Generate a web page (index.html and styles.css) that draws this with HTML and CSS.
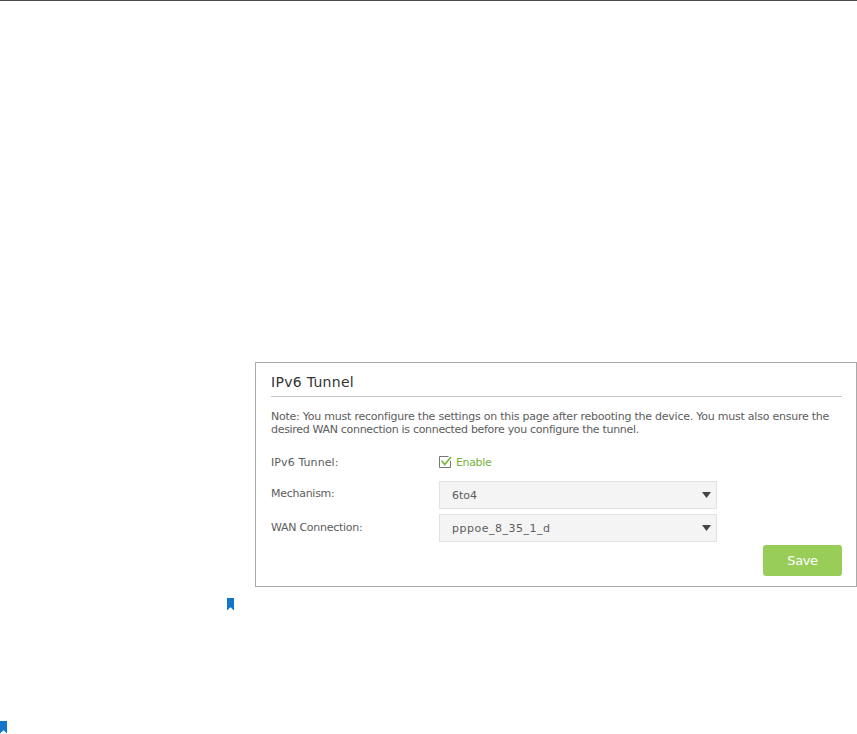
FILE: index.html
```
<!DOCTYPE html>
<html lang="en">
<head>
<meta charset="utf-8">
<title>IPv6 Tunnel</title>
<link rel="stylesheet" href="styles.css">
</head>
<body>
<main class="page">
  <section class="card">
    <h1 class="title">IPv6 Tunnel</h1>
    <p class="note"><span class="n1">Note: You must reconfigure the settings on this page after rebooting the device. You must also ensure the</span><br><span class="n2">desired WAN connection is connected before you configure the tunnel.</span></p>
    <div class="row row-check">
      <span class="label label-wide">IPv6 Tunnel:</span>
      <span class="check"><svg width="13" height="12" viewBox="0 0 13 12"><path d="M11.5 5v6.5H.5V.5h9" fill="none" stroke="#777"/><path d="M2.5 4.5l3.2 4L12 1" fill="none" stroke="#7dbb42" stroke-width="1.8"/></svg><span class="enable">Enable</span></span>
    </div>
    <div class="row">
      <span class="label up">Mechanism:</span>
      <div class="select"><span>6to4</span><svg width="9" height="6" viewBox="0 0 9 6"><path d="M0 0h9L4.5 6z" fill="#444"/></svg></div>
    </div>
    <div class="row">
      <span class="label up-wan">WAN Connection:</span>
      <div class="select"><span class="wan">pppoe_8_35_1_d</span><svg width="9" height="6" viewBox="0 0 9 6"><path d="M0 0h9L4.5 6z" fill="#444"/></svg></div>
    </div>
    <div class="actions"><button class="save">Save</button></div>
  </section>
  <svg class="mark mark-note" width="7" height="13" viewBox="0 0 7 13"><path d="M0 0h7v12.5L3.5 9.3 0 12.5z" fill="#1277c9"/></svg>
  <svg class="mark mark-edge" width="7" height="13" viewBox="0 0 7 13"><path d="M0 0h7v12.5L3.5 9.3 0 12.5z" fill="#1277c9"/></svg>
</main>
</body>
</html>
```

FILE: styles.css
```
* { box-sizing: border-box; }
body { margin: 0; background: #fff; }
.page {
  height: 734px;
  overflow: hidden;
  border-top: 1px solid #4a4a4c;
  padding-top: 361px;
  font: 11px/13px "DejaVu Sans", Verdana, sans-serif;
  color: #5c5c5c;
}
.card {
  width: 602px;
  height: 225px;
  margin-left: 255px;
  border: 1px solid #aaa;
  padding: 0 14px 0 15px;
}
.title {
  margin: 0;
  width: 571px;
  height: 34px;
  border-bottom: 1px solid #c6c6c6;
  padding-top: 10px;
  font-size: 14px;
  line-height: 18px;
  font-weight: 400;
  letter-spacing: 0.3px;
  color: #333;
}
.note { margin: 13px 0 0; white-space: nowrap; }
.n1 { letter-spacing: -0.235px; }
.n2 { letter-spacing: -0.31px; }
.row { display: flex; height: 28px; margin-bottom: 5px; }
.row-check { height: 20px; margin: 16px 0 9px; align-items: center; }
.label { width: 168px; white-space: nowrap; letter-spacing: -0.27px; }
.label-wide { letter-spacing: 0.1px; }
.up { padding-top: 6px; }
.up-wan { padding-top: 7px; }
.check { display: flex; align-items: center; gap: 4px; color: #75b240; }
.enable { letter-spacing: -0.35px; }
.select {
  display: flex;
  align-items: center;
  justify-content: space-between;
  width: 278px;
  height: 28px;
  padding: 0 5px 0 12px;
  border: 1px solid #e2e2e2;
  background: #f4f4f4;
}
.wan { letter-spacing: 0.5px; }
.actions { display: flex; justify-content: flex-end; margin-top: -2px; }
.save {
  width: 79px;
  height: 31px;
  border: 0;
  border-radius: 3px;
  padding: 0;
  background: #98cd58;
  color: #fff;
  font: 13px/31px "DejaVu Sans", Verdana, sans-serif;
  letter-spacing: -0.4px;
}
.mark { display: block; }
.mark-note { margin: 11px 0 0 227px; }
.mark-edge { margin-top: 110px; }
```
